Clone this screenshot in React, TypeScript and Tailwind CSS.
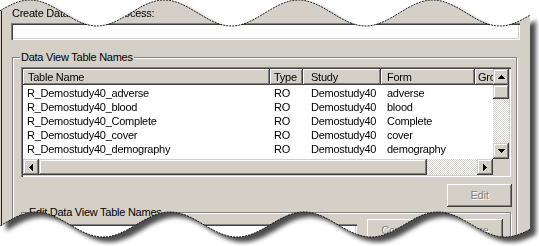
import React from "react";

const PW = 530;
function topY(x: number) {
  return 13 + 13 * Math.cos((2 * Math.PI * (x - 97)) / 134.3);
}
function botY(x: number) {
  return 224.5 - 12.5 * Math.cos((2 * Math.PI * (x - 36)) / 134);
}
function buildPaths() {
  const top: string[] = [];
  for (let x = 0; x <= PW; x += 2) top.push(`${x},${topY(x).toFixed(2)}`);
  const bot: string[] = [];
  for (let x = PW; x >= 0; x -= 2) bot.push(`${x},${botY(x).toFixed(2)}`);
  return {
    clip: `M${top.join(" L")} L${bot.join(" L")} Z`,
    topLine: `M${top.join(" L")}`,
    botLine: `M${bot.join(" L")}`,
    left: `M1.5,${topY(0).toFixed(2)} L1.5,${botY(0).toFixed(2)}`,
  };
}

const UpArrow = () => (
  <svg width="7" height="4" viewBox="0 0 7 4" shapeRendering="crispEdges">
    <path d="M3 0h1v1h1v1h1v1h1v1H0V3h1V2h1V1h1z" fill="#000" />
  </svg>
);
const DownArrow = () => (
  <svg width="7" height="4" viewBox="0 0 7 4" shapeRendering="crispEdges">
    <path d="M0 0h7v1H6v1H5v1H4v1H3V3H2V2H1V1H0z" fill="#000" />
  </svg>
);
const LeftArrow = () => (
  <svg width="4" height="7" viewBox="0 0 4 7" shapeRendering="crispEdges">
    <path d="M3 0h1v7H3V6H2V5H1V4H0V3h1V2h1V1h1z" fill="#000" />
  </svg>
);
const RightArrow = () => (
  <svg width="4" height="7" viewBox="0 0 4 7" shapeRendering="crispEdges">
    <path d="M0 0h1v1h1v1h1v1h1v1H3v1H2v1H1v1H0z" fill="#000" />
  </svg>
);

const raised =
  "bg-[#d4d0c8] shadow-[inset_-1px_-1px_0_#404040,inset_1px_1px_0_#d4d0c8,inset_-2px_-2px_0_#808080,inset_2px_2px_0_#fff]";
const btnRaised =
  "bg-[#d4d0c8] shadow-[inset_-1px_-1px_0_#404040,inset_1px_1px_0_#fff,inset_-2px_-2px_0_#808080]";
const sunken =
  "shadow-[inset_1px_1px_0_#808080,inset_2px_2px_0_#404040,inset_-1px_-1px_0_#fff,inset_-2px_-2px_0_#d4d0c8]";
const checker =
  "bg-[conic-gradient(#fff_25%,#d4d0c8_0_50%,#fff_0_75%,#d4d0c8_0)] bg-[length:2px_2px]";
const headerCell =
  "h-full shrink-0 bg-[#d4d0c8] shadow-[inset_-1px_-1px_0_#404040,inset_1px_1px_0_#fff,inset_-2px_-2px_0_#808080] leading-[16px] whitespace-nowrap overflow-hidden";

const rows = [
  ["R_Demostudy40_adverse", "RO", "Demostudy40", "adverse"],
  ["R_Demostudy40_blood", "RO", "Demostudy40", "blood"],
  ["R_Demostudy40_Complete", "RO", "Demostudy40", "Complete"],
  ["R_Demostudy40_cover", "RO", "Demostudy40", "cover"],
  ["R_Demostudy40_demography", "RO", "Demostudy40", "demography"],
  ["R_Demostudy40_Disposition", "RO", "Demostudy40", "Disposition"],
];

export default function App() {
  const p = buildPaths();
  return (
    <div className="relative w-[539px] h-[246px] overflow-hidden bg-white font-['Liberation_Sans',Arial,sans-serif] text-[11px] tracking-[-0.25px] text-black">
      <svg width="0" height="0" className="absolute">
        <defs>
          <clipPath id="torn" clipPathUnits="userSpaceOnUse">
            <path d={p.clip} />
          </clipPath>
        </defs>
      </svg>
      <div className="[filter:drop-shadow(6px_5px_2px_rgba(0,0,0,0.7))]">
        <div className="w-[530px] h-[246px] overflow-hidden bg-[#d4d0c8] [clip-path:url(#torn)] flex flex-col pl-[11px] pr-[10px] pt-[6px]">
          <div className="shrink-0 pl-[1px] h-[14px] leading-[14px] whitespace-nowrap">Create Data Views In Process:</div>
          <div className={`shrink-0 mt-[3px] h-[17px] bg-white ${sunken}`} />

          {/* Group box 1 */}
          <div className="shrink-0 relative mt-[17px] ml-[1px] mr-[3px] h-[200px] border border-[#808080] shadow-[inset_1px_1px_0_#fff,1px_1px_0_#fff] pl-[8px] pt-[9px] pr-[5px]">
            <span className="absolute left-[7px] -top-[7px] px-[1px] bg-[#d4d0c8] leading-[13px] whitespace-nowrap">
              Data View Table Names
            </span>

            {/* List view */}
            <div className={`h-[110px] bg-white p-[2px] ${sunken}`}>
              <div className="flex flex-col h-full">
                <div className="flex h-[90px] shrink-0">
                  <div className="flex-1 flex flex-col overflow-hidden">
                    <div className="flex h-[16px] shrink-0">
                      <div className={`${headerCell} w-[247px] pl-[5px]`}>Table Name</div>
                      <div className={`${headerCell} w-[33px] pl-[4px]`}>Type</div>
                      <div className={`${headerCell} w-[78px] pl-[8px]`}>Study</div>
                      <div className={`${headerCell} w-[94px] pl-[6px]`}>Form</div>
                      <div className={`${headerCell} w-[80px] pl-[3px]`}>Group</div>
                    </div>
                    <div className="pt-[1px] flex flex-col overflow-hidden">
                      {rows.map((r) => (
                        <div key={r[0]} className="flex h-[14px] shrink-0 leading-[14px] whitespace-nowrap">
                          <div className="w-[247px] pl-[4px] shrink-0">{r[0]}</div>
                          <div className="w-[33px] pl-[4px] shrink-0">{r[1]}</div>
                          <div className="w-[78px] pl-[8px] shrink-0">{r[2]}</div>
                          <div className="w-[94px] pl-[6px] shrink-0">{r[3]}</div>
                        </div>
                      ))}
                    </div>
                  </div>
                  {/* vertical scrollbar */}
                  <div className="w-[16px] flex flex-col shrink-0">
                    <div className={`h-[16px] shrink-0 flex items-center justify-center ${raised}`}>
                      <UpArrow />
                    </div>
                    <div className={`h-[14px] shrink-0 ${raised}`} />
                    <div className={`flex-1 ${checker}`} />
                    <div className={`h-[16px] shrink-0 flex items-center justify-center ${raised}`}>
                      <DownArrow />
                    </div>
                  </div>
                </div>
                {/* horizontal scrollbar */}
                <div className="flex h-[16px] shrink-0">
                  <div className={`w-[16px] shrink-0 flex items-center justify-center ${raised}`}>
                    <LeftArrow />
                  </div>
                  <div className={`w-[388px] shrink-0 ${raised}`} />
                  <div className={`flex-1 ${checker}`} />
                  <div className={`w-[16px] shrink-0 flex items-center justify-center ${raised}`}>
                    <RightArrow />
                  </div>
                  <div className="w-[16px] shrink-0 bg-[#d4d0c8]" />
                </div>
              </div>
            </div>

            <div className="flex justify-end mt-[7px] -mr-[1px]">
              <div className={`w-[65px] h-[23px] flex items-center justify-center ${btnRaised}`}>
                <span className="text-[#808080] [text-shadow:1px_1px_0_#fff]">Edit</span>
              </div>
            </div>

            {/* Group box 2 */}
            <div className="relative mt-[5px] h-[60px] border border-[#808080] shadow-[inset_1px_1px_0_#fff,1px_1px_0_#fff] flex items-start pl-[7px] pt-[6px] pr-[7px]">
              <span className="absolute left-[6px] -top-[7px] px-[1px] bg-[#d4d0c8] leading-[13px] whitespace-nowrap">
                Edit Data View Table Names
              </span>
              <div className={`mt-[5px] flex-1 h-[20px] bg-white ${sunken}`} />
              <div className={`ml-[10px] w-[136px] shrink-0 h-[23px] flex items-center justify-center ${btnRaised}`}>
                <span className="text-[#808080] [text-shadow:1px_1px_0_#fff] whitespace-nowrap">Commit Name Change</span>
              </div>
            </div>
          </div>
        </div>
      </div>
      <svg className="absolute inset-0 pointer-events-none" width="539" height="246">
        <path d={p.topLine} fill="none" stroke="#000" strokeWidth="1" strokeDasharray="2 1" opacity="0.85" />
        <path d={p.botLine} fill="none" stroke="#000" strokeWidth="1" strokeDasharray="2 1" opacity="0.85" />
        <path d={p.left} fill="none" stroke="#202020" strokeWidth="1" />
      </svg>
    </div>
  );
}
